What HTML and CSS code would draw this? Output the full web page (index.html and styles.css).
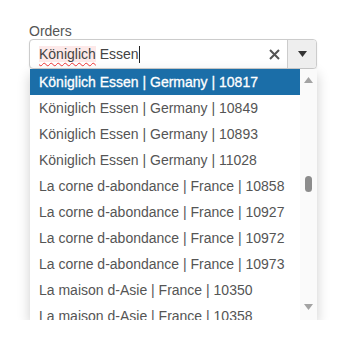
FILE: index.html
```html
<!DOCTYPE html>
<html>
<head>
  <title>Orders</title>
  <link rel="stylesheet" href="styles.css">
</head>
<body>

<div class="field">
  <div class="label">Orders</div>

  <div class="combo">
    <div class="text"><span class="typo">Königlich</span> Essen<span class="caret"></span></div>
    <div class="clear">
      <svg width="11" height="11" viewBox="0 0 11 11"><path d="M1 1L10 10M10 1L1 10" stroke="#555" stroke-width="2"/></svg>
    </div>
    <div class="btn">
      <svg width="9" height="6" viewBox="0 0 9 6"><path d="M0 0H9L4.5 6Z" fill="#333"/></svg>
    </div>
  </div>

  <div class="list">
    <div class="items">
      <div class="item selected">Königlich Essen | Germany | 10817</div>
      <div class="item">Königlich Essen | Germany | 10849</div>
      <div class="item">Königlich Essen | Germany | 10893</div>
      <div class="item">Königlich Essen | Germany | 11028</div>
      <div class="item">La corne d-abondance | France | 10858</div>
      <div class="item">La corne d-abondance | France | 10927</div>
      <div class="item">La corne d-abondance | France | 10972</div>
      <div class="item">La corne d-abondance | France | 10973</div>
      <div class="item">La maison d-Asie | France | 10350</div>
      <div class="item">La maison d-Asie | France | 10358</div>
    </div>
    <div class="scroll">
      <svg class="arrow" width="9" height="6" viewBox="0 0 9 6"><path d="M0 6H9L4.5 0Z" fill="#a3a3a3"/></svg>
      <div class="track"><div class="thumb"></div></div>
      <svg class="arrow" width="9" height="6" viewBox="0 0 9 6"><path d="M0 0H9L4.5 6Z" fill="#a3a3a3"/></svg>
    </div>
  </div>
</div>

</body>
</html>
```

FILE: styles.css
```css
body {
  font-family: "Liberation Sans", Arial, sans-serif;
  font-size: 14px;
  color: #555;
  background: #fff;
  margin: 0;
  padding: 23px 0 0 29px;
}
.field {
  width: 288px;
}
.label {
  line-height: 16px;
  color: #555;
}
.combo {
  display: flex;
  height: 28px;
  border: 1px solid #ccc;
  border-radius: 4px;
  background: #fff;
  box-shadow: 0 1px 2px rgba(0,0,0,0.08);
  overflow: hidden;
}
.text {
  flex: 1;
  padding-left: 9px;
  line-height: 28px;
  color: #444;
  white-space: nowrap;
}
.typo {
  background: #fde9e9;
  text-decoration: underline wavy #e33;
  text-decoration-thickness: 1px;
  text-underline-offset: 3px;
}
.caret {
  display: inline-block;
  width: 1px;
  height: 17px;
  background: #222;
  vertical-align: -4px;
}
.clear {
  width: 26px;
  display: flex;
  align-items: center;
  justify-content: center;
}
.btn {
  width: 28px;
  background: #eee;
  border-left: 1px solid #ccc;
  display: flex;
  align-items: center;
  justify-content: center;
}
.list {
  display: flex;
  height: 251px;
  margin-left: 1px;
  background: #fff;
  box-shadow: 0 5px 12px rgba(0,0,0,0.2);
  overflow: hidden;
}
.items {
  flex: 1;
  overflow: hidden;
}
.item {
  height: 26px;
  line-height: 26px;
  padding-left: 9px;
  white-space: nowrap;
  color: #555;
}
.item.selected {
  background: #1b6ea8;
  color: #fff;
  -webkit-text-stroke: 0.3px #fff;
}
.scroll {
  width: 17px;
  background: #fafafa;
  display: flex;
  flex-direction: column;
  align-items: center;
  padding: 8px 0 10px;
}
.track {
  flex: 1;
  width: 100%;
  display: flex;
  justify-content: center;
  padding-top: 93px;
}
.thumb {
  width: 7px;
  height: 16px;
  border-radius: 4px;
  background: #8c8c8c;
}
```
